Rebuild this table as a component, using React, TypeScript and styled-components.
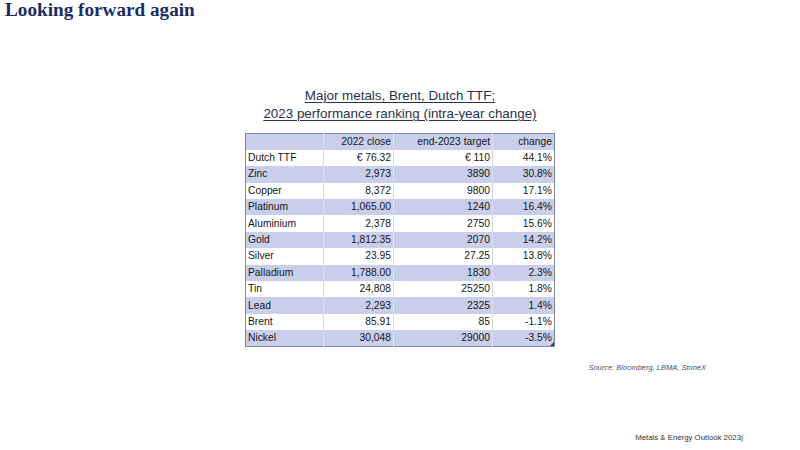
import styled, { createGlobalStyle } from "styled-components";

type Row = {
  name: string;
  close: string;
  target: string;
  change: string;
};

const rows: Row[] = [
  { name: "Dutch TTF", close: "€ 76.32", target: "€ 110", change: "44.1%" },
  { name: "Zinc", close: "2,973", target: "3890", change: "30.8%" },
  { name: "Copper", close: "8,372", target: "9800", change: "17.1%" },
  { name: "Platinum", close: "1,065.00", target: "1240", change: "16.4%" },
  { name: "Aluminium", close: "2,378", target: "2750", change: "15.6%" },
  { name: "Gold", close: "1,812.35", target: "2070", change: "14.2%" },
  { name: "Silver", close: "23.95", target: "27.25", change: "13.8%" },
  { name: "Palladium", close: "1,788.00", target: "1830", change: "2.3%" },
  { name: "Tin", close: "24,808", target: "25250", change: "1.8%" },
  { name: "Lead", close: "2,293", target: "2325", change: "1.4%" },
  { name: "Brent", close: "85.91", target: "85", change: "-1.1%" },
  { name: "Nickel", close: "30,048", target: "29000", change: "-3.5%" },
];

export default function App() {
  return (
    <>
      <GlobalStyle />
      <Page>
        <SlideTitle>Looking forward again</SlideTitle>

        <ChartBlock>
          <ChartTitle>
            <TitleLine>Major metals, Brent, Dutch TTF;</TitleLine>
            <TitleLine>2023 performance ranking (intra-year change)</TitleLine>
          </ChartTitle>

          <Table>
            <thead>
              <BodyRow $shaded>
                <Cell $first />
                <Cell>2022 close</Cell>
                <Cell>end-2023 target</Cell>
                <Cell $last>change</Cell>
              </BodyRow>
            </thead>
            <tbody>
              {rows.map((row, i) => (
                <BodyRow key={row.name} $shaded={i % 2 === 1}>
                  <Cell $first>{row.name}</Cell>
                  <Cell>{row.close}</Cell>
                  <Cell>{row.target}</Cell>
                  <Cell $last>{row.change}</Cell>
                </BodyRow>
              ))}
            </tbody>
          </Table>
          <ResizeHandle />
        </ChartBlock>

        <SourceNote>Source: Bloomberg, LBMA, StoneX</SourceNote>
        <Footer>Metals &amp; Energy Outlook 2023|</Footer>
      </Page>
    </>
  );
}

const GlobalStyle = createGlobalStyle`
  html, body {
    margin: 0;
    padding: 0;
    background: #ffffff;
  }
`;

const Page = styled.div`
  display: flex;
  flex-direction: column;
  width: 800px;
  height: 450px;
  overflow: hidden;
  background: #ffffff;
  font-family: "Liberation Sans", Arial, sans-serif;
`;

const SlideTitle = styled.h1`
  margin: 0;
  padding-left: 5px;
  color: #1c2b64;
  font-family: "Liberation Serif", "Times New Roman", serif;
  font-size: 19.2px;
  font-weight: 700;
  line-height: 20px;
`;

const ChartBlock = styled.section`
  position: relative;
  display: flex;
  flex-direction: column;
  align-items: center;
  align-self: center;
  margin-top: 67px;
`;

const ChartTitle = styled.div`
  display: flex;
  flex-direction: column;
  align-items: center;
  margin-bottom: 10px;
  color: #2b3052;
  font-size: 13.4px;
  line-height: 18px;
`;

const TitleLine = styled.span`
  text-decoration: underline;
  text-underline-offset: 2px;
  text-decoration-thickness: 1px;
`;

const Table = styled.table`
  width: 310px;
  border: 1px solid #7c87a6;
  border-collapse: collapse;
  table-layout: fixed;
  color: #161616;
  font-size: 10.3px;
`;

const BodyRow = styled.tr<{ $shaded?: boolean }>`
  height: 16.4px;
  background: ${(p) => (p.$shaded ? "#c9cfeb" : "#ffffff")};

  td {
    border-right: 1px solid ${(p) => (p.$shaded ? "#dde1f3" : "#d6d6d6")};
  }
`;

const Cell = styled.td<{ $first?: boolean; $last?: boolean }>`
  padding: 0 2px;
  text-align: ${(p) => (p.$first ? "left" : "right")};
  white-space: nowrap;
  line-height: 12px;

  &:nth-child(1) {
    width: 73px;
  }
  &:nth-child(2) {
    width: 65px;
  }
  &:nth-child(3) {
    width: 94px;
  }

  ${(p) => (p.$last ? "border-right: none !important;" : "")}
`;

const ResizeHandle = styled.span`
  position: absolute;
  right: 1px;
  bottom: 1px;
  width: 0;
  height: 0;
  border-left: 4px solid transparent;
  border-bottom: 4px solid #1f3a7a;
`;

const SourceNote = styled.div`
  align-self: flex-end;
  margin-top: 16px;
  margin-right: 94px;
  color: #44546a;
  font-size: 7.5px;
  font-style: italic;
  line-height: 9px;
`;

const Footer = styled.div`
  align-self: flex-end;
  margin-top: auto;
  margin-right: 57px;
  margin-bottom: 8px;
  color: #333333;
  font-size: 7.8px;
  line-height: 9px;
`;
